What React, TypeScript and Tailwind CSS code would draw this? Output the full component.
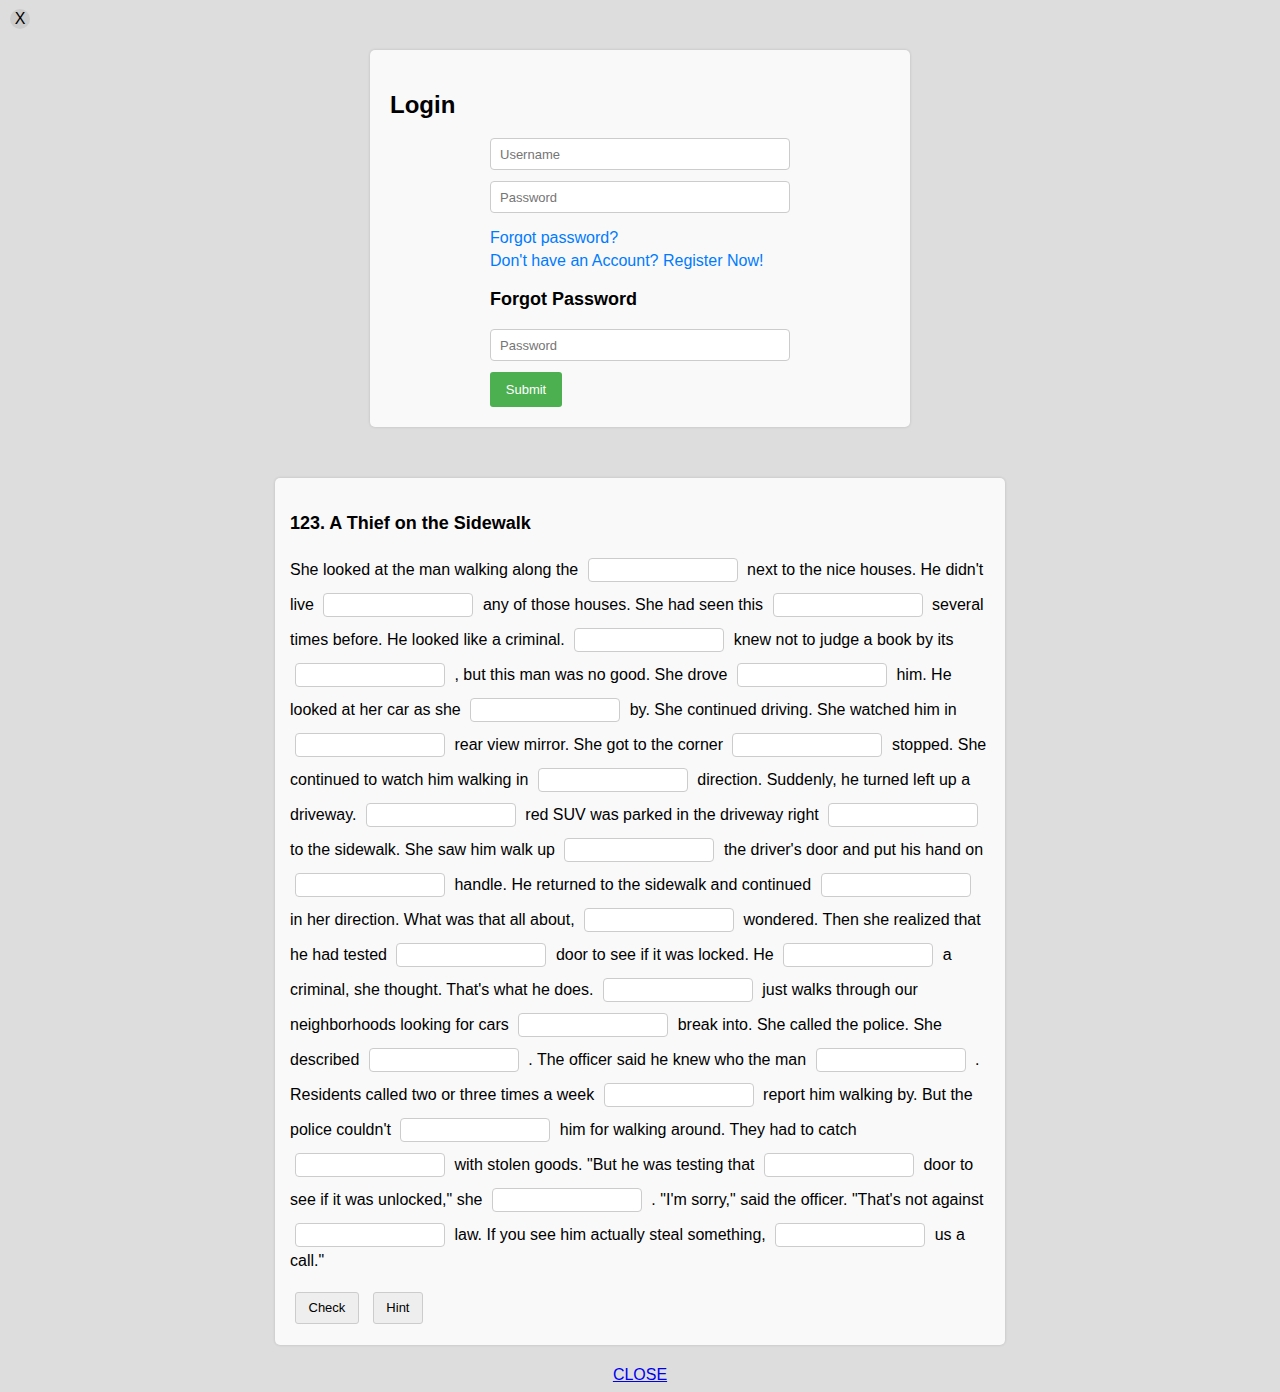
import React from 'react';

const story: string[] = [
  'She looked at the man walking along the',
  'next to the nice houses. He didn\'t live',
  'any of those houses. She had seen this',
  'several times before. He looked like a criminal.',
  'knew not to judge a book by its',
  ', but this man was no good. She drove',
  'him. He looked at her car as she',
  'by. She continued driving. She watched him in',
  'rear view mirror. She got to the corner',
  'stopped. She continued to watch him walking in',
  'direction. Suddenly, he turned left up a driveway.',
  'red SUV was parked in the driveway right',
  'to the sidewalk. She saw him walk up',
  'the driver\'s door and put his hand on',
  'handle. He returned to the sidewalk and continued',
  'in her direction. What was that all about,',
  'wondered. Then she realized that he had tested',
  'door to see if it was locked. He',
  'a criminal, she thought. That\'s what he does.',
  'just walks through our neighborhoods looking for cars',
  'break into. She called the police. She described',
  '. The officer said he knew who the man',
  '. Residents called two or three times a week',
  'report him walking by. But the police couldn\'t',
  'him for walking around. They had to catch',
  'with stolen goods. "But he was testing that',
  'door to see if it was unlocked," she',
  '. "I\'m sorry," said the officer. "That\'s not against',
  'law. If you see him actually steal something,',
  'us a call."',
];

function Blank() {
  return (
    <input
      type="text"
      className="mx-[5px] mb-[1px] mt-[10px] inline-block h-[24px] w-[150px] rounded-[4px] border border-[#ccc] bg-white px-1 align-bottom text-[14px]"
    />
  );
}

export default function App() {
  return (
    <div className="relative min-h-[1392px] bg-[#ddd] pb-4 pt-[50px] font-['Liberation_Sans',Arial,Helvetica,sans-serif] text-black">
      <button className="absolute left-[10px] top-[9px] flex h-[20px] w-[20px] items-center justify-center rounded-full bg-[#ccc] text-[16px] leading-none text-black">
        X
      </button>

      <div className="mx-auto w-[540px] rounded-[5px] bg-[#f9f9f9] px-5 pb-5 pt-[21px] shadow-[0_0_3px_rgba(0,0,0,0.15)]">
        <h2 className="mb-[19px] mt-[20px] text-[24px] font-bold leading-[28px]">Login</h2>
        <div className="mx-auto w-[300px]">
          <input
            className="mb-[11px] block h-[32px] w-full rounded-[4px] border border-[#ccc] bg-white px-[9px] text-[13px] placeholder:text-[#757575]"
            placeholder="Username"
          />
          <input
            type="password"
            className="mb-[13px] block h-[32px] w-full rounded-[4px] border border-[#ccc] bg-white px-[9px] text-[13px] placeholder:text-[#757575]"
            placeholder="Password"
          />
          <a href="#" className="block text-[16px] leading-[23px] text-[#007bff]">
            Forgot password?
          </a>
          <a href="#" className="block text-[16px] leading-[23px] text-[#007bff]">
            Don't have an Account? Register Now!
          </a>
          <h3 className="mb-[19px] mt-[16px] text-[18px] font-bold leading-[22px]">Forgot Password</h3>
          <input
            type="password"
            className="mb-[11px] block h-[32px] w-full rounded-[4px] border border-[#ccc] bg-white px-[9px] text-[13px] placeholder:text-[#757575]"
            placeholder="Password"
          />
          <button className="h-[35px] w-[72px] rounded-[3px] bg-[#4caf50] text-[13px] text-white">
            Submit
          </button>
        </div>
      </div>

      <div className="mx-auto mt-[51px] w-[730px] rounded-[5px] bg-[#f9f9f9] p-[15px] shadow-[0_0_3px_rgba(0,0,0,0.15)]">
        <h3 className="mb-[14px] mt-[19px] text-[18px] font-bold leading-[22px]">
          123. A Thief on the Sidewalk
        </h3>
        <p className="mb-[18px] text-[16px] leading-[26px]">
          {story.map((seg, i) => (
            <React.Fragment key={i}>
              {seg}
              {i < story.length - 1 && (
                <>
                  {' '}
                  <Blank />{' '}
                </>
              )}
            </React.Fragment>
          ))}
        </p>
        <div className="flex gap-[14px] px-[5px] pb-[6px]">
          <button className="h-[32px] rounded-[3px] border border-[#ccc] bg-[#eee] px-[12.5px] text-[13px]">
            Check
          </button>
          <button className="h-[32px] rounded-[3px] border border-[#ccc] bg-[#eee] px-[12.5px] text-[13px]">
            Hint
          </button>
        </div>
      </div>

      <div className="mt-[18px] text-center">
        <a href="#" className="text-[16px] leading-[18px] text-[#0000ee] underline">
          CLOSE
        </a>
      </div>
    </div>
  );
}
